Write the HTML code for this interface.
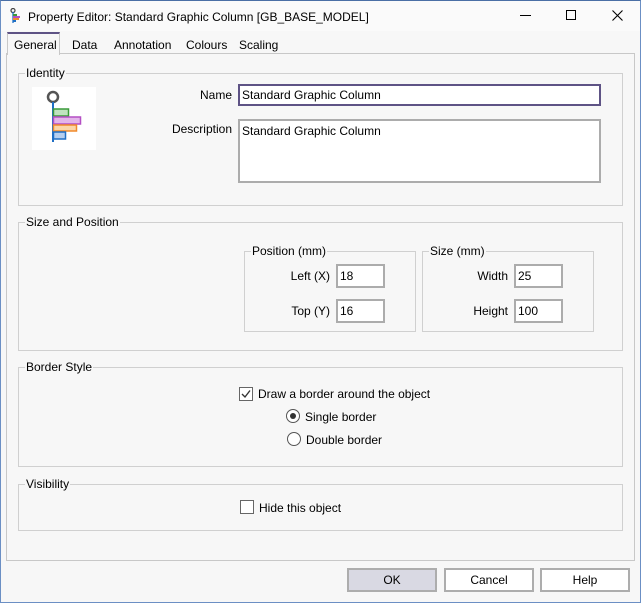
<!DOCTYPE html>
<html><head><style>
*{margin:0;padding:0;box-sizing:border-box}
body{width:641px;height:603px;background:#f7f7f7;font-family:"Liberation Sans",sans-serif;font-size:12px;color:#000;position:relative;overflow:hidden}
.a{position:absolute;white-space:nowrap}
.frame{position:absolute;left:0;top:0;width:641px;height:603px;border:1px solid #6b8fc4;border-top:1px solid #4a6fa5}
.grp{position:absolute;border:1px solid #d0d0d0}
.lbl{position:absolute;top:-8px;left:6px;background:#f7f7f7;padding:0 1px;line-height:15px}
.inp{position:absolute;background:#fff;border:2px solid #acacac;padding:1px 2px;line-height:15px}
.s{padding-top:3px}
.btn{position:absolute;top:568px;height:24px;border:2px solid #adadad;background:#fff;text-align:center;line-height:20px}
.r{text-align:right}
</style></head><body>
<div class="frame"></div>
<div class="a" style="left:1px;top:1px;width:639px;height:30px;background:#fafafa"></div>
<svg class="a" style="left:10px;top:8px" width="12" height="16" viewBox="0 0 12 16"><circle cx="3" cy="2.5" r="2" fill="none" stroke="#444" stroke-width="1.2"/><line x1="3" y1="4" x2="3" y2="15" stroke="#1f6fc5" stroke-width="1.3"/><rect x="3" y="6" width="4" height="2" fill="#3a9a3a"/><rect x="3" y="8" width="7" height="2" fill="#b44fc4"/><rect x="3" y="10" width="6" height="2" fill="#f08a2c"/><rect x="3" y="12" width="3" height="2" fill="#1f6fc5"/></svg>
<div class="a" style="left:28px;top:10px">Property Editor: Standard Graphic Column [GB_BASE_MODEL]</div>
<div class="a" style="left:520px;top:15px;width:11px;height:1px;background:#000"></div>
<div class="a" style="left:566px;top:10px;width:10px;height:10px;border:1px solid #000"></div>
<svg class="a" style="left:612px;top:10px" width="11" height="11"><path d="M0.5 0.5L10.5 10.5M10.5 0.5L0.5 10.5" stroke="#000" stroke-width="1.1"/></svg>

<div class="a" style="left:6px;top:53px;width:629px;height:508px;border:1px solid #c8c8c8"></div>
<div class="a" style="left:7px;top:32px;width:53px;height:23px;background:#f7f7f7;border:1px solid #c8c8c8;border-bottom:none;border-top:2px solid #5e5385"></div>
<div class="a" style="left:14px;top:38px">General</div>
<div class="a" style="left:72px;top:38px">Data</div>
<div class="a" style="left:114px;top:38px">Annotation</div>
<div class="a" style="left:186px;top:38px">Colours</div>
<div class="a" style="left:239px;top:38px">Scaling</div>

<div class="grp" style="left:18px;top:73px;width:605px;height:133px"><div class="lbl">Identity</div></div>
<div class="a" style="left:32px;top:87px;width:64px;height:63px;background:#fff"></div>
<svg class="a" style="left:32px;top:87px" width="64" height="63" viewBox="0 0 64 63"><circle cx="21" cy="10" r="5" fill="none" stroke="#555" stroke-width="2.5"/><line x1="21" y1="15" x2="21" y2="55" stroke="#1f6fc5" stroke-width="2"/><rect x="21.5" y="22" width="15" height="7" fill="#bfe3bf" stroke="#3a9a3a" stroke-width="1.5"/><rect x="21.5" y="30" width="27" height="7" fill="#e3b5ea" stroke="#b44fc4" stroke-width="1.5"/><rect x="21.5" y="38" width="23" height="6" fill="#fbd6a8" stroke="#f08a2c" stroke-width="1.5"/><rect x="21.5" y="45" width="12" height="7" fill="#b5cff0" stroke="#1f6fc5" stroke-width="1.5"/></svg>
<div class="a r" style="left:150px;width:82px;top:88px">Name</div>
<div class="inp s" style="left:238px;top:84px;width:363px;height:22px;border-color:#5e5385;padding-top:2px">Standard Graphic Column</div>
<div class="a r" style="left:150px;width:82px;top:122px">Description</div>
<div class="inp" style="left:238px;top:119px;width:363px;height:64px;padding-top:3px">Standard Graphic Column</div>

<div class="grp" style="left:18px;top:222px;width:605px;height:129px"><div class="lbl">Size and Position</div></div>
<div class="grp" style="left:244px;top:251px;width:172px;height:81px"><div class="lbl">Position (mm)</div></div>
<div class="grp" style="left:422px;top:251px;width:172px;height:81px"><div class="lbl">Size (mm)</div></div>
<div class="a r" style="left:250px;width:80px;top:269px">Left (X)</div>
<div class="inp s" style="left:336px;top:264px;width:49px;height:24px">18</div>
<div class="a r" style="left:250px;width:80px;top:304px">Top (Y)</div>
<div class="inp s" style="left:336px;top:299px;width:49px;height:24px">16</div>
<div class="a r" style="left:428px;width:80px;top:269px">Width</div>
<div class="inp s" style="left:514px;top:264px;width:49px;height:24px">25</div>
<div class="a r" style="left:428px;width:80px;top:304px">Height</div>
<div class="inp s" style="left:514px;top:299px;width:49px;height:24px">100</div>

<div class="grp" style="left:18px;top:367px;width:605px;height:100px"><div class="lbl">Border Style</div></div>
<div class="a" style="left:239px;top:387px;width:14px;height:14px;border:1px solid #666;background:#fff"></div>
<svg class="a" style="left:239px;top:387px" width="14" height="14"><path d="M3 7L6 10L11 3.5" fill="none" stroke="#333" stroke-width="1.4"/></svg>
<div class="a" style="left:258px;top:387px">Draw a border around the object</div>
<div class="a" style="left:286px;top:409px;width:14px;height:14px;border:1px solid #555;border-radius:50%;background:#fff"></div>
<div class="a" style="left:290px;top:413px;width:6px;height:6px;border-radius:50%;background:#333"></div>
<div class="a" style="left:305px;top:410px">Single border</div>
<div class="a" style="left:287px;top:432px;width:14px;height:14px;border:1px solid #555;border-radius:50%;background:#fff"></div>
<div class="a" style="left:306px;top:433px">Double border</div>

<div class="grp" style="left:18px;top:484px;width:605px;height:47px"><div class="lbl">Visibility</div></div>
<div class="a" style="left:240px;top:500px;width:14px;height:14px;border:1px solid #666;background:#fff"></div>
<div class="a" style="left:259px;top:501px">Hide this object</div>

<div class="btn" style="left:347px;width:90px;background:#d9d9e3">OK</div>
<div class="btn" style="left:444px;width:90px">Cancel</div>
<div class="btn" style="left:540px;width:90px">Help</div>
</body></html>
